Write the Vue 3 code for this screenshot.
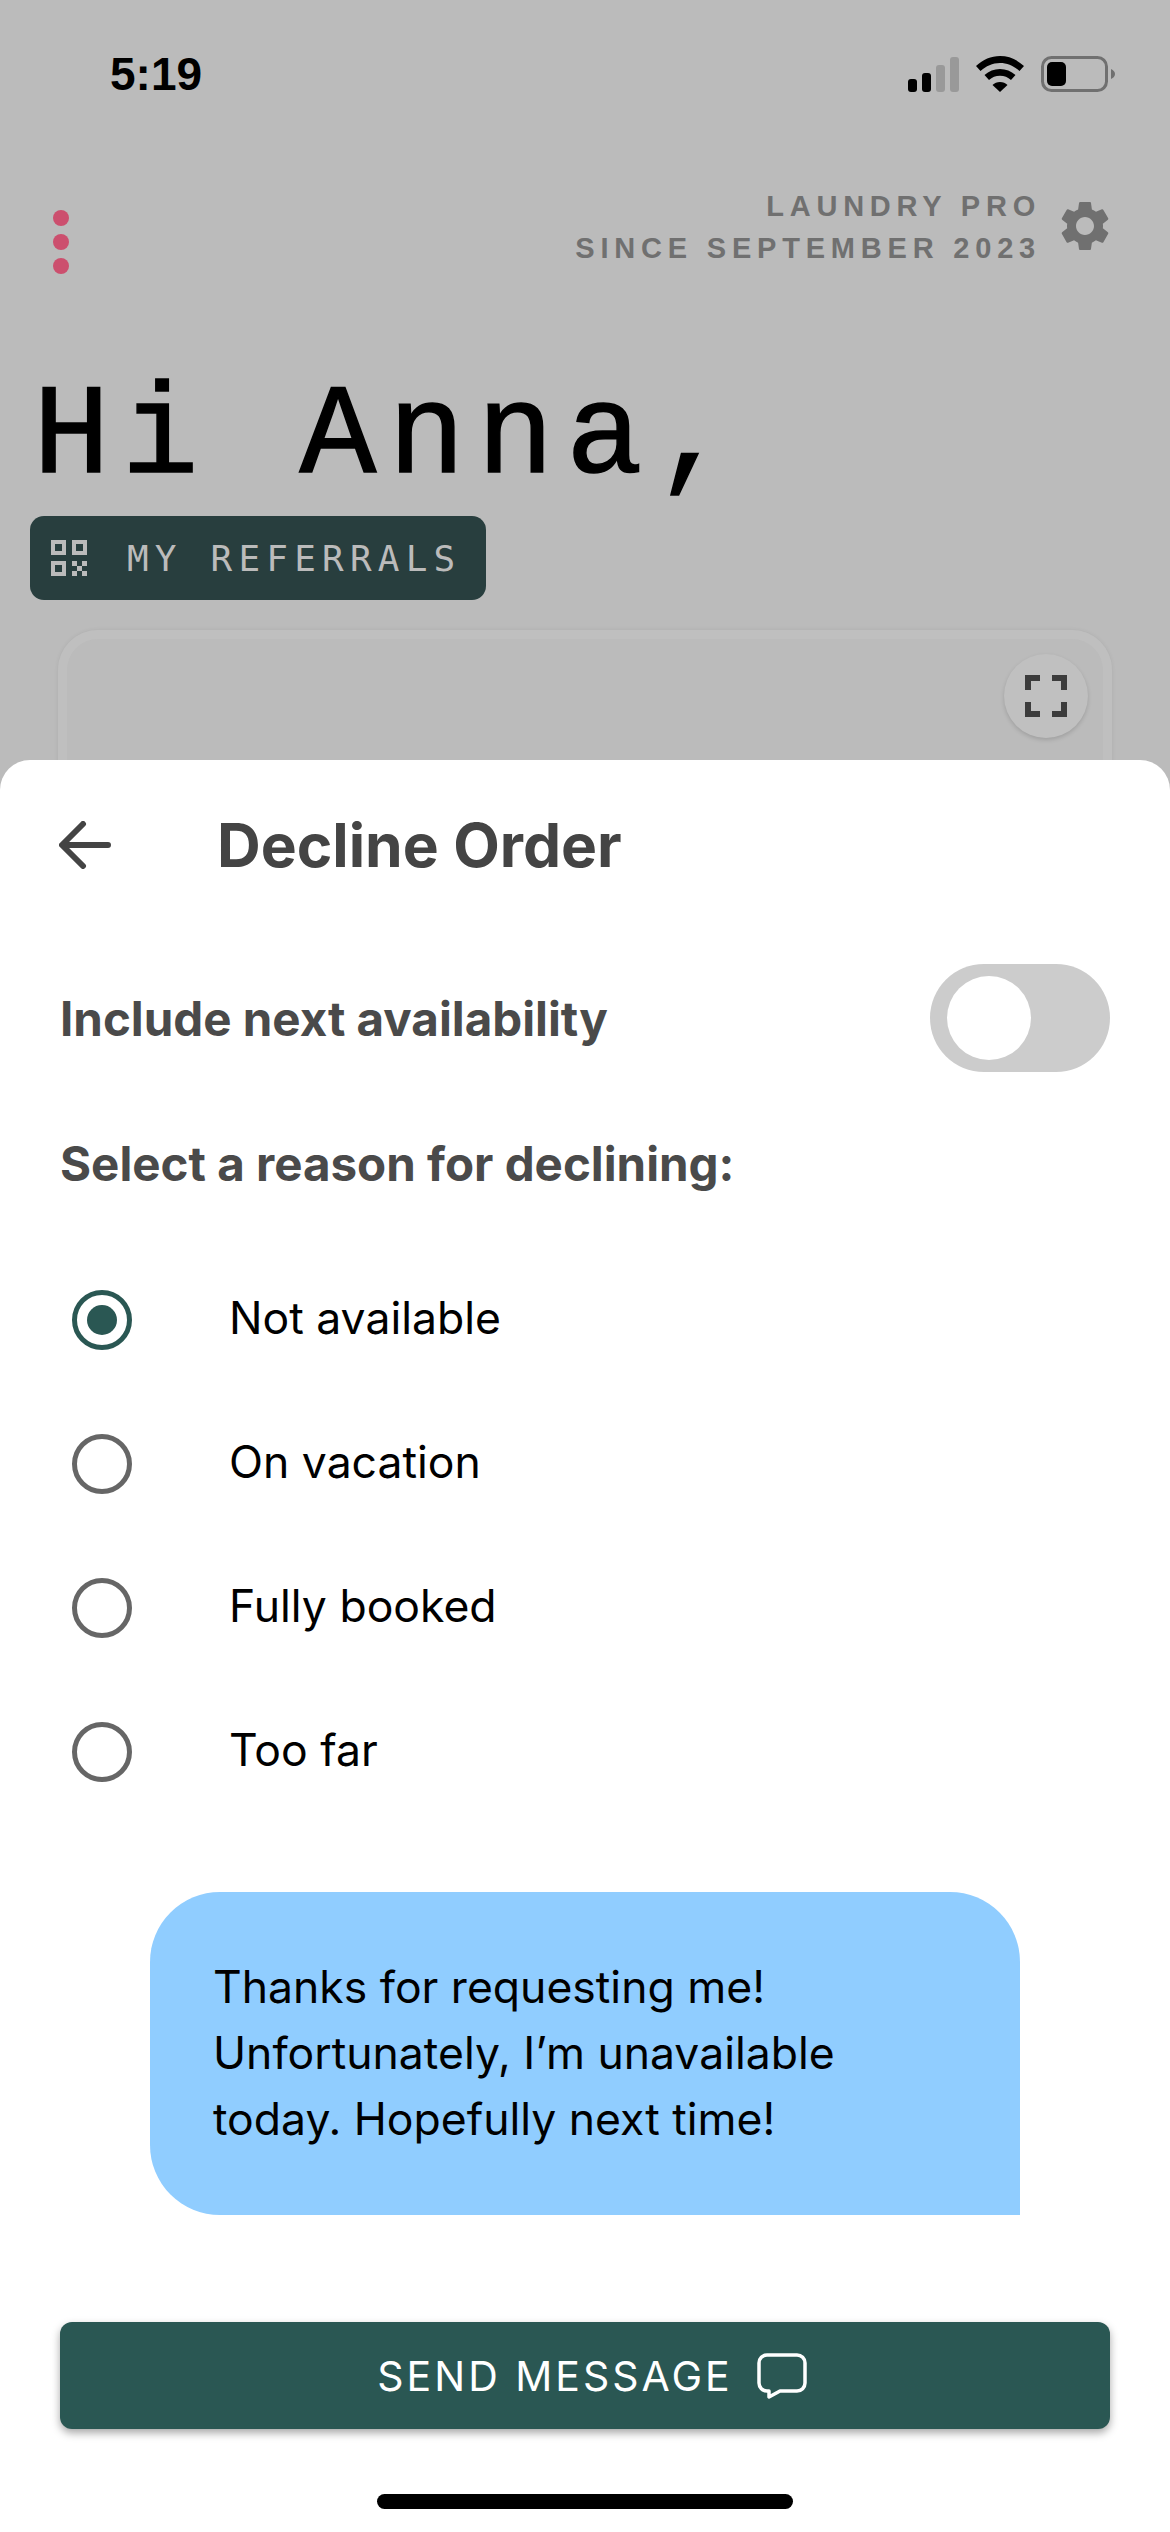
<script setup>
import { ref } from 'vue';

const reasons = ['Not available', 'On vacation', 'Fully booked', 'Too far'];
const selected = ref('Not available');
const includeNext = ref(false);
</script>

<template>
  <div class="page">
    <section class="behind">
      <div class="status">
        <span class="time">5:19</span>
        <div class="status-icons">
          <svg class="signal" width="51" height="35" viewBox="0 0 51 35">
            <rect x="0" y="22" width="9" height="13" rx="3" fill="#000" />
            <rect x="14" y="16" width="9" height="19" rx="3" fill="#000" />
            <rect x="28" y="8" width="9" height="27" rx="3" fill="#999" />
            <rect x="42" y="0" width="9" height="35" rx="3" fill="#999" />
          </svg>
          <svg class="wifi" width="48" height="36" viewBox="0 0 48 36">
            <path d="M24 0C15 0 7 3.500 0 10l4.500 5C10 10 16.500 7 24 7s14 3 19.500 8L48 10C41 3.500 33 0 24 0z" fill="#000" />
            <path d="M24 13c-6 0-11 2-15.500 6L13 24c3-2.800 6.800-4.300 11-4.300s8 1.500 11 4.300l4.500-5C35 15 30 13 24 13z" fill="#000" />
            <path d="M24 26c-3 0-5.500 1-7.500 3L24 36l7.500-7c-2-2-4.500-3-7.500-3z" fill="#000" />
          </svg>
          <svg class="battery" width="74" height="36" viewBox="0 0 74 36">
            <rect x="1.500" y="1.500" width="64" height="33" rx="9" fill="none" stroke="#707070" stroke-width="3" />
            <rect x="6" y="6" width="19" height="24" rx="5" fill="#000" />
            <path d="M70 13c2.500 1 4 3 4 5s-1.500 4-4 5z" fill="#707070" />
          </svg>
        </div>
      </div>

      <div class="top-row">
        <div class="dots">
          <i></i><i></i><i></i>
        </div>
        <div class="pro">
          <div class="pro-text">
            <div>LAUNDRY PRO</div>
            <div>SINCE SEPTEMBER 2023</div>
          </div>
          <svg class="gear" width="60" height="60" viewBox="0 0 24 24">
            <path fill="#707070" d="M19.140 12.940c.04-.3.06-.61.06-.94 0-.32-.02-.64-.07-.94l2.030-1.580c.18-.14.23-.41.12-.61l-1.920-3.320c-.12-.22-.37-.29-.59-.22l-2.390.96c-.5-.38-1.030-.7-1.620-.94l-.36-2.540c-.04-.24-.24-.41-.48-.41h-3.840c-.24 0-.43.17-.47.41l-.36 2.540c-.59.24-1.130.57-1.620.94l-2.390-.96c-.22-.08-.47 0-.59.22L2.740 8.870c-.12.21-.08.47.12.61l2.030 1.580c-.05.3-.09.63-.09.94s.02.64.07.94l-2.030 1.580c-.18.14-.23.41-.12.61l1.920 3.320c.12.22.37.29.59.22l2.390-.96c.5.38 1.030.7 1.620.94l.36 2.540c.05.24.24.41.48.41h3.840c.24 0 .44-.17.47-.41l.36-2.540c.59-.24 1.130-.56 1.620-.94l2.390.96c.22.08.47 0 .59-.22l1.920-3.320c.12-.22.07-.47-.12-.61l-2.010-1.580zM12 15.600c-1.980 0-3.600-1.620-3.600-3.600s1.620-3.600 3.600-3.600 3.600 1.620 3.600 3.600-1.620 3.600-3.600 3.600z" />
          </svg>
        </div>
      </div>

      <h1 class="hello">Hi Anna,</h1>

      <div class="referrals">
        <svg width="36" height="36" viewBox="0 0 36 36">
          <path fill="#bbb" fill-rule="evenodd" d="M0 0h15v15H0zM4 4v7h7V4zM21 0h15v15H21zM25 4v7h7V4zM0 21h15v15H0zM4 25v7h7v-7z" />
          <path fill="#bbb" d="M21 21h5v5h-5zM31 21h5v5h-5zM26 26h5v5h-5zM21 31h5v5h-5zM31 31h5v5h-5z" />
        </svg>
        <span>MY REFERRALS</span>
      </div>

      <div class="map-card">
        <div class="expand">
          <svg width="42" height="42" viewBox="0 0 42 42">
            <path fill="#3c3c3c" d="M0 0h15v6H6v9H0zM27 0h15v15h-6V6h-9zM0 27h6v9h9v6H0zM36 27h6v15H27v-6h9z" />
          </svg>
        </div>
      </div>
    </section>

    <section class="sheet">
      <div class="sheet-head">
        <svg class="back" width="52" height="48" viewBox="0 0 52 48">
          <path d="M49 24H4M24 3L3 24l21 21" fill="none" stroke="#444" stroke-width="6" stroke-linecap="round" stroke-linejoin="round" />
        </svg>
        <h2>Decline Order</h2>
      </div>

      <div class="include">
        <span class="label">Include next availability</span>
        <div class="toggle" @click="includeNext = !includeNext">
          <div class="knob" :class="{ on: includeNext }"></div>
        </div>
      </div>

      <div class="label reason-title">Select a reason for declining:</div>

      <div class="reasons">
        <div v-for="r in reasons" :key="r" class="reason" @click="selected = r">
          <span class="radio" :class="{ checked: selected === r }"></span>
          <span class="reason-text">{{ r }}</span>
        </div>
      </div>

      <div class="bubble">Thanks for requesting me! Unfortunately, I’m unavailable today. Hopefully next time!</div>

      <button class="send">
        <span>SEND MESSAGE</span>
        <svg width="50" height="46" viewBox="0 0 50 46">
          <path d="M10 2h30a8 8 0 0 1 8 8v20a8 8 0 0 1-8 8H23L12 44v-6h-2a8 8 0 0 1-8-8V10a8 8 0 0 1 8-8z" fill="none" stroke="#fff" stroke-width="3.500" stroke-linejoin="round" />
        </svg>
      </button>

      <div class="home-bar"></div>
    </section>
  </div>
</template>

<style scoped>
.page {
  width: 1170px;
  height: 2532px;
  display: flex;
  flex-direction: column;
  background: #bbbbbb;
  font-family: Inter, "Liberation Sans", sans-serif;
  overflow: hidden;
}
.behind {
  height: 760px;
  flex: none;
  overflow: hidden;
}
.status {
  height: 148px;
  display: flex;
  align-items: center;
  justify-content: space-between;
  padding: 0 55px 0 110px;
}
.time {
  font-family: "Liberation Sans", sans-serif;
  font-size: 46px;
  font-weight: 700;
  color: #000;
}
.status-icons {
  display: flex;
  align-items: center;
  gap: 17px;
}
.top-row {
  display: flex;
  justify-content: space-between;
  padding: 37px 55px 0 53px;
  height: 220px;
  box-sizing: border-box;
}
.dots {
  display: flex;
  flex-direction: column;
  gap: 8px;
  padding-top: 25px;
}
.dots i {
  display: block;
  width: 16px;
  height: 16px;
  border-radius: 50%;
  background: #cc4f6e;
}
.pro {
  display: flex;
  align-items: flex-start;
  gap: 14px;
}
.pro-text {
  font-family: "Liberation Sans", sans-serif;
  font-weight: 700;
  font-size: 29px;
  line-height: 42px;
  letter-spacing: 5.800px;
  color: #707070;
  text-align: right;
}
.gear {
  margin-top: 11px;
}
.hello {
  margin: 0 0 0 33px;
  font-family: "Liberation Mono", monospace;
  font-weight: 400;
  font-size: 128px;
  line-height: 140px;
  letter-spacing: 12px;
  -webkit-text-stroke: 1.500px #000;
  color: #000;
}
.referrals {
  width: 456px;
  height: 84px;
  margin: 8px 0 0 30px;
  border-radius: 14px;
  background: #283e3e;
  color: #bbb;
  display: flex;
  align-items: center;
  gap: 40px;
  padding-left: 21px;
  box-sizing: border-box;
  font-family: "DejaVu Sans Mono", monospace;
  font-size: 36px;
  letter-spacing: 6.200px;
}
.map-card {
  height: 300px;
  margin: 30px 58px 0;
  border: 9px solid #bfbfbf;
  border-bottom: none;
  border-radius: 40px 40px 0 0;
  box-shadow: 0 0 4px rgba(0, 0, 0, 0.08);
  display: flex;
  justify-content: flex-end;
  padding: 15px 15px 0 0;
  box-sizing: border-box;
}
.expand {
  width: 84px;
  height: 84px;
  border-radius: 50%;
  background: #c0c0c0;
  box-shadow: 0 2px 4px rgba(0, 0, 0, 0.15);
  display: flex;
  align-items: center;
  justify-content: center;
}
.sheet {
  flex: 1;
  background: #fff;
  border-radius: 30px 30px 0 0;
  display: flex;
  flex-direction: column;
  padding: 0 60px;
  color: #444;
}
.sheet-head {
  display: flex;
  align-items: center;
  gap: 106px;
  height: 84px;
  margin-top: 43px;
  margin-left: -1px;
}
.sheet-head h2 {
  margin: 0;
  font-size: 60.500px;
  font-weight: 700;
  color: #444;
}
.include {
  display: flex;
  align-items: center;
  justify-content: space-between;
  margin-top: 77px;
}
.label {
  font-size: 47.500px;
  font-weight: 700;
  color: #4a4a4a;
}
.toggle {
  width: 180px;
  height: 108px;
  border-radius: 54px;
  background: #cccccc;
  display: flex;
  align-items: center;
  padding-left: 17px;
  box-sizing: border-box;
}
.knob {
  width: 84px;
  height: 84px;
  border-radius: 50%;
  background: #fff;
}
.knob.on {
  margin-left: 62px;
}
.reason-title {
  margin-top: 63px;
}
.reasons {
  margin-top: 56px;
  display: flex;
  flex-direction: column;
}
.reason {
  height: 144px;
  display: flex;
  align-items: center;
  gap: 97px;
  margin-left: 12px;
  font-size: 44.500px;
  color: #000;
}
.reason-text {
  margin-top: -4px;
}
.radio {
  width: 60px;
  height: 60px;
  border: 5px solid #666;
  border-radius: 50%;
  box-sizing: border-box;
  display: flex;
  align-items: center;
  justify-content: center;
  flex: none;
}
.radio.checked {
  border-color: #2a5753;
}
.radio.checked::after {
  content: "";
  width: 30px;
  height: 30px;
  border-radius: 50%;
  background: #2a5753;
}
.bubble {
  width: 870px;
  height: 323px;
  margin: 68px 0 0 90px;
  padding: 62px 100px 0 63px;
  box-sizing: border-box;
  background: #90cdff;
  border-radius: 70px 70px 0 70px;
  font-size: 44.500px;
  line-height: 66px;
  color: #000;
}
.send {
  width: 1050px;
  height: 107px;
  margin-top: 107px;
  padding: 0 0 0 14px;
  border: none;
  border-radius: 12px;
  background: #2a5753;
  box-shadow: 0 4px 8px rgba(0, 0, 0, 0.35);
  color: #fff;
  font-family: inherit;
  font-size: 41px;
  letter-spacing: 3px;
  display: flex;
  align-items: center;
  justify-content: center;
  gap: 24px;
}
.home-bar {
  width: 416px;
  height: 15px;
  border-radius: 8px;
  background: #000;
  margin: 65px auto 0;
}
</style>
